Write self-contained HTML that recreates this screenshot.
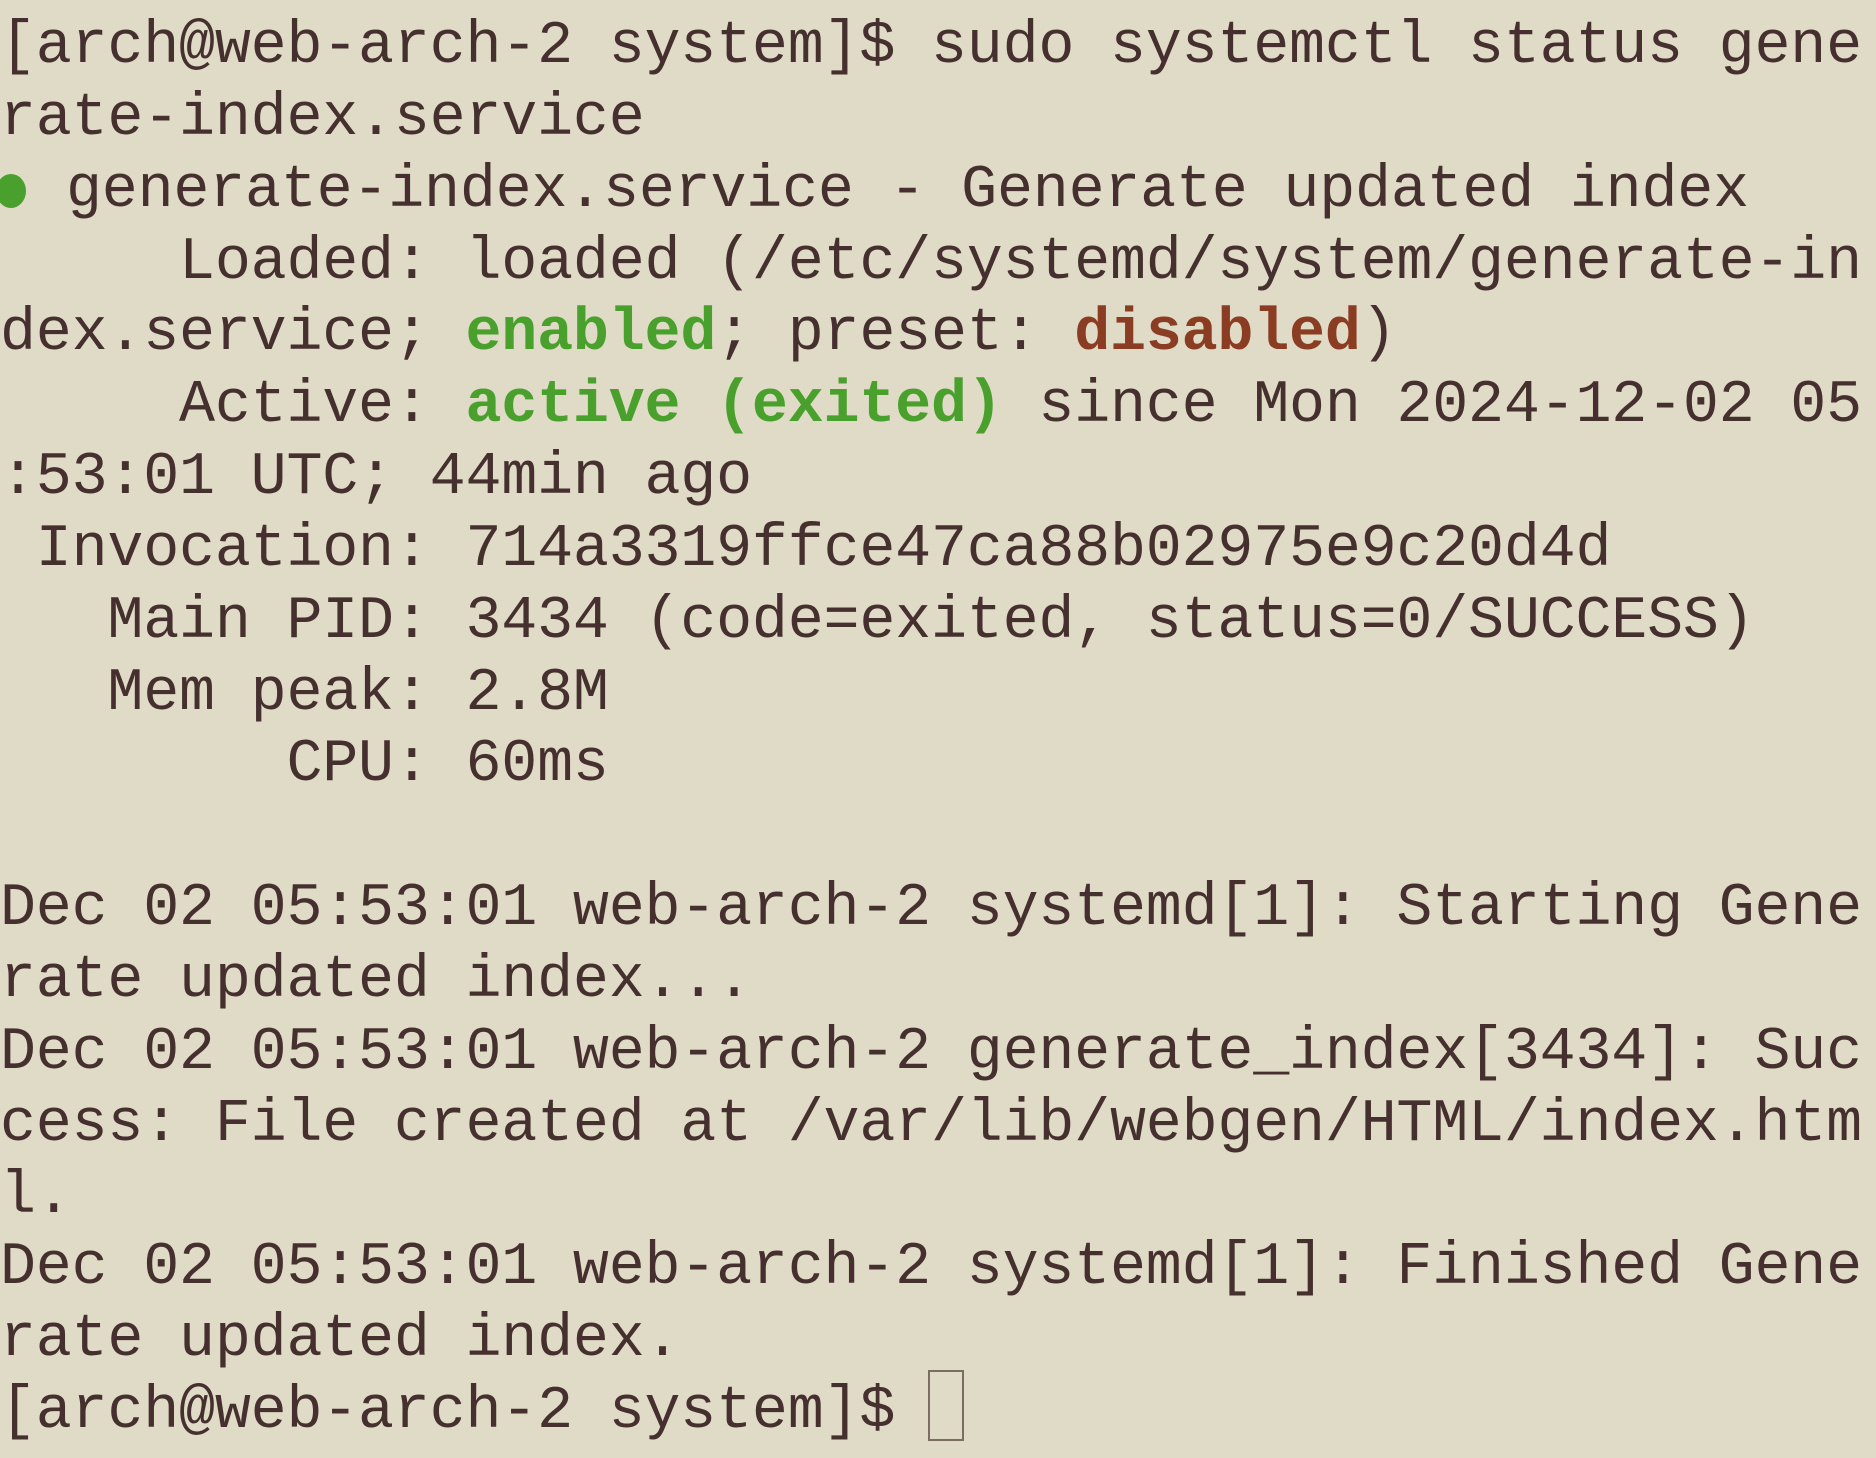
<!DOCTYPE html>
<html><head><meta charset="utf-8"><style>
html,body{margin:0;padding:0;}
body{width:1876px;height:1458px;overflow:hidden;background:#dfdbc6;color:#46302f;font-family:"Liberation Mono","Courier New",monospace;font-size:60px;letter-spacing:-0.2px;}
.t{position:absolute;left:0;top:12px;line-height:71.85px;white-space:pre;}
.g{color:#4aa02c;font-weight:bold;}
.r{color:#8a3d22;font-weight:bold;}
.dot{display:inline-block;width:30px;height:34px;border-radius:50%;background:#4aa02c;margin-left:-4px;margin-right:40px;vertical-align:-2px;}
.cur{position:absolute;left:928px;top:1370px;width:32px;height:67px;border:2px solid #7a6d62;}
</style></head><body>
<div class="t">[arch@web-arch-2 system]$ sudo systemctl status gene
rate-index.service
<span class="dot"></span>generate-index.service - Generate updated index
     Loaded: loaded (/etc/systemd/system/generate-in
dex.service; <span class="g">enabled</span>; preset: <span class="r">disabled</span>)
     Active: <span class="g">active (exited)</span> since Mon 2024-12-02 05
:53:01 UTC; 44min ago
 Invocation: 714a3319ffce47ca88b02975e9c20d4d
   Main PID: 3434 (code=exited, status=0/SUCCESS)
   Mem peak: 2.8M
        CPU: 60ms

Dec 02 05:53:01 web-arch-2 systemd[1]: Starting Gene
rate updated index...
Dec 02 05:53:01 web-arch-2 generate_index[3434]: Suc
cess: File created at /var/lib/webgen/HTML/index.htm
l.
Dec 02 05:53:01 web-arch-2 systemd[1]: Finished Gene
rate updated index.
[arch@web-arch-2 system]$ </div>
<div class="cur"></div>
</body></html>
